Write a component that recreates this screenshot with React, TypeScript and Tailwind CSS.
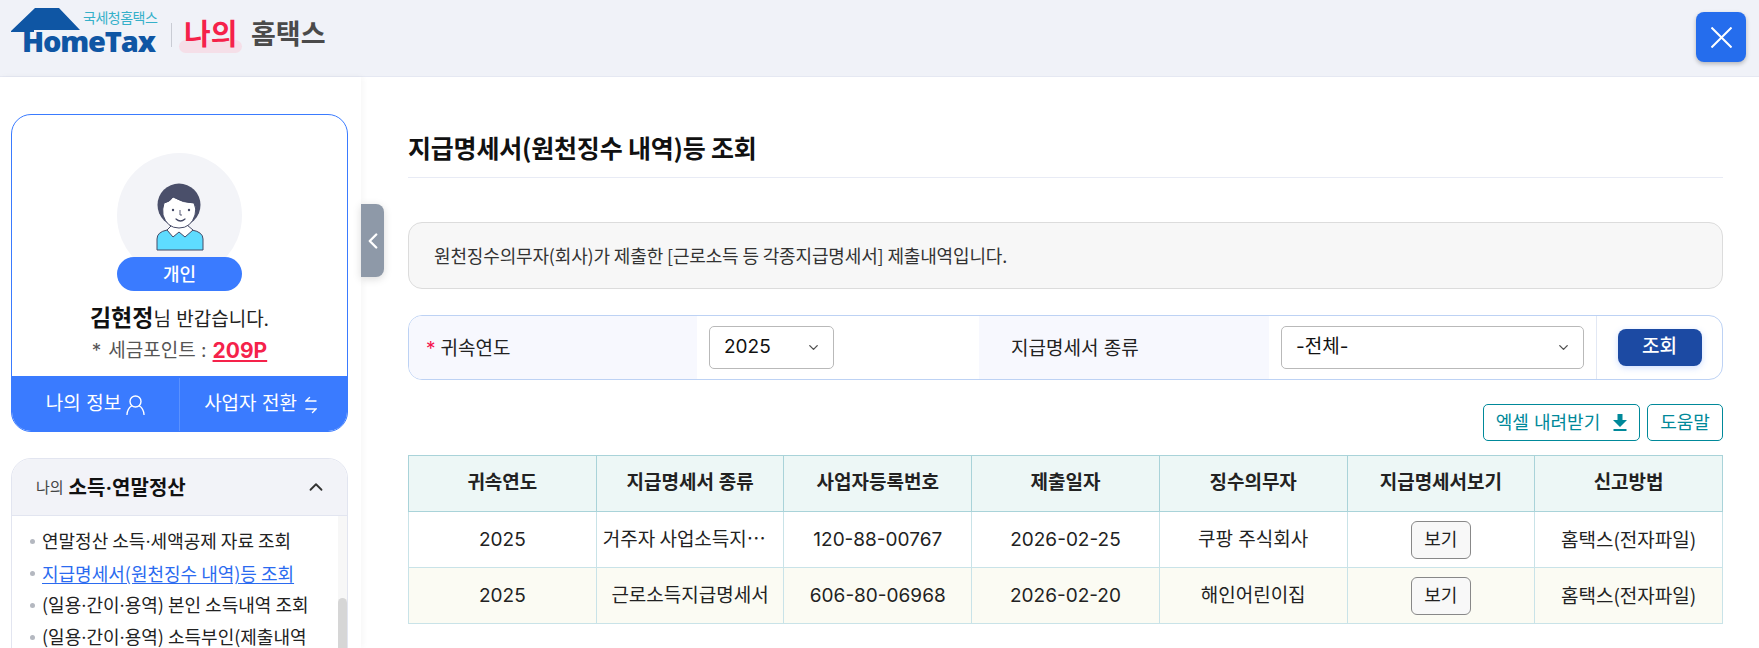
import React from "react";
import { ChevronDown, ChevronUp, ChevronLeft } from "lucide-react";

const rows = [
  { year: "2025", kind: "거주자 사업소득지급명세서", bizNo: "120-88-00767", date: "2026-02-25", payer: "쿠팡 주식회사", bg: "bg-white" },
  { year: "2025", kind: "근로소득지급명세서", bizNo: "606-80-06968", date: "2026-02-20", payer: "해인어린이집", bg: "bg-[#fbfbf3]" },
];

const headers = ["귀속연도", "지급명세서 종류", "사업자등록번호", "제출일자", "징수의무자", "지급명세서보기", "신고방법"];

const menu = [
  "연말정산 소득·세액공제 자료 조회",
  "지급명세서(원천징수 내역)등 조회",
  "(일용·간이·용역) 본인 소득내역 조회",
  "(일용·간이·용역) 소득부인(제출내역",
];

// the CJK font's middle dot is full width, the reference has a narrow one
function withDots(text: string) {
  return text.split("·").map((part, i) => (
    <React.Fragment key={i}>
      {i > 0 && <span className="font-['Inter',sans-serif]">·</span>}
      {part}
    </React.Fragment>
  ));
}

function Logo() {
  return (
    <div className="flex items-center h-[76px] pb-[6px]">
      <div className="relative w-[160px] h-[70px] self-start">
        <svg width="90" height="56" viewBox="0 0 90 56" className="absolute left-0 top-0">
          <path d="M11 31 L35 8 L59 8 L80 30 L34 30 L34 32 L27 32 L27 48 L25 48 L25 32 L11 32 Z" fill="#0f56a4" />
        </svg>
        <span className="absolute left-[83px] top-[8px] text-[14px] leading-5 whitespace-nowrap tracking-[-0.5px] text-[#35b0c9]">국세청홈택스</span>
        <span className="absolute left-[22px] top-[29px] text-[29px] leading-[24px] font-extrabold text-[#0f56a4] font-['Open_Sans',sans-serif] tracking-[-1.2px]">HomeTax</span>
      </div>
      <div className="w-px h-[24px] bg-[#c9ccd4] ml-[11px]" />
      <div className="relative ml-[7px] w-[63px] h-[40px]">
        <div className="absolute left-0 right-0 bottom-[2px] h-[13px] rounded-full bg-[#f5dfe8]" />
        <span className="absolute left-[5px] top-0 text-[29px] leading-[40px] font-bold text-[#f5224a]">나의</span>
      </div>
      <span className="ml-[9px] text-[27px] leading-9 font-bold text-[#4a4a4a]">홈택스</span>
    </div>
  );
}

function Avatar() {
  return (
    <svg width="125" height="125" viewBox="0 0 125 125" className="rounded-full bg-[#f3f4f8]">
      <path d="M40 97 V86 Q40 79 50 77 L62 73 L75 77 Q86 79 86 86 V97 Z" fill="#5edcff" stroke="#454a66" strokeWidth="1" />
      <path d="M50 77 L55 72 L70 72 L76 77 L68 84 L62 79 L56 84 Z" fill="#fff" stroke="#454a66" strokeWidth="1" />
      <circle cx="62" cy="52" r="21.5" fill="#4a4f6a" />
      <path d="M47 50 Q53 49 56 44 Q66 50 77 50 Q80 56 78 62 Q74 75 62 75 Q50 75 46 62 Q45 56 47 50 Z" fill="#fff" stroke="#454a66" strokeWidth="1" />
      <circle cx="56" cy="57" r="1.2" fill="#454a66" />
      <circle cx="72" cy="57" r="1.2" fill="#454a66" />
      <path d="M63 57 V62 H65" fill="none" stroke="#454a66" strokeWidth="0.9" />
      <path d="M59 66 Q63.5 70 68 66" fill="none" stroke="#454a66" strokeWidth="1.2" strokeLinecap="round" />
    </svg>
  );
}

function ProfileCard() {
  return (
    <div className="w-[337px] h-[318px] border border-[#3a7bff] rounded-[20px] overflow-hidden flex flex-col items-center bg-white">
      <div className="mt-[38px]">
        <Avatar />
      </div>
      <div className="relative -mt-[21px] w-[125px] h-[34px] rounded-full bg-[#3a7bff] text-white text-[18px] font-medium flex items-center justify-center">개인</div>
      <p className="mt-[9px] text-[#222] text-[19px] leading-[36px]">
        <b className="text-[23px] font-bold text-[#111]">김현정</b>님 반갑습니다.
      </p>
      <p className="-mt-[1px] text-[19px] leading-[28px] text-[#555] flex items-center">
        <span className="mr-[7px]">*</span>세금포인트 :
        <span className="ml-[6px] text-[21px] font-bold text-[#f5224a] underline underline-offset-2">209P</span>
      </p>
      <div className="mt-auto w-full h-[55px] pt-[2px] bg-[#3a7bff] flex text-white text-[19px]">
        <div className="w-[168px] flex items-center justify-center gap-[5px] border-r border-[#5a91ff]">
          나의 정보
          <svg width="19" height="20" viewBox="0 0 19 20" fill="none" stroke="#fff" strokeWidth="1.4">
            <circle cx="9.5" cy="6.5" r="5.5" />
            <path d="M1 19.5 Q1.5 13.5 5.5 11 M18 19.5 Q17.5 13.5 13.5 11" strokeLinecap="round" />
          </svg>
        </div>
        <div className="flex-1 flex items-center justify-center gap-[8px] pr-[6px]">
          사업자 전환
          <svg width="12" height="18" viewBox="0 0 12 18" fill="none" stroke="#fff" strokeWidth="1.4" strokeLinecap="round">
            <path d="M11 5 H1 L4.5 1.5" />
            <path d="M1 13 H11 L7.5 16.5" />
          </svg>
        </div>
      </div>
    </div>
  );
}

function SideMenu() {
  return (
    <div className="mt-[26px] w-[337px] border border-[#e2e5f0] rounded-t-[20px] overflow-hidden bg-white font-['Noto_Sans_CJK_KR',sans-serif]">
      <div className="h-[57px] bg-[#f2f3f8] border-b border-[#e2e5f0] flex items-center pl-[24px] pr-[20px]">
        <span className="text-[15px] text-[#444]">나의</span>
        <span className="ml-[5px] text-[20px] font-bold text-[#111]">{withDots("소득·연말정산")}</span>
        <ChevronUp className="ml-auto w-[22px] h-[22px] text-[#333]" strokeWidth={2} />
      </div>
      <div className="flex h-[140px]">
        <ul className="flex-1 pt-[9px] pl-[18px] text-[18px] leading-[32px] text-[#222] whitespace-nowrap overflow-hidden">
          {menu.map((item, i) => (
            <li key={item} className="h-[32px] flex items-center gap-[7px]">
              <span className="w-[5px] h-[5px] rounded-full bg-[#b4b8c0]" />
              <span className={i === 1 ? "text-[#2b6bf0] underline underline-offset-2" : ""}>{withDots(item)}</span>
            </li>
          ))}
        </ul>
        <div className="w-[9px] bg-[#f7f7f7]">
          <div className="mt-[82px] h-[60px] bg-[#d6d6d6] rounded-t-full" />
        </div>
      </div>
    </div>
  );
}

function SelectBox({ value, className }: { value: string; className: string }) {
  return (
    <div className={`h-[43px] border border-[#b9b9b9] rounded-[5px] bg-white flex items-center justify-between pl-[14px] pr-[12px] text-[19px] text-[#111] ${className}`}>
      {value}
      <ChevronDown className="w-[15px] h-[15px] text-[#555]" strokeWidth={2.2} />
    </div>
  );
}

function SearchForm() {
  return (
    <div className="mt-[26px] h-[65px] border border-[#bdd2f4] rounded-[14px] overflow-hidden flex items-stretch text-[19px] text-[#222]">
      <div className="w-[288px] bg-[#f7f8fe] flex items-center pl-[17px] pt-[3px]">
        <span className="text-[#f5124f] mr-[5px]">*</span>귀속연도
      </div>
      <div className="w-[282px] flex items-center pl-[12px]">
        <SelectBox value="2025" className="w-[125px]" />
      </div>
      <div className="w-[290px] bg-[#f7f8fe] flex items-center pl-[32px] pt-[3px]">지급명세서 종류</div>
      <div className="flex-1 flex items-center pl-[12px] pr-[12px]">
        <SelectBox value="-전체-" className="w-full" />
      </div>
      <div className="w-[126px] border-l border-[#e2e8f4] flex items-center justify-center">
        <button className="w-[84px] h-[37px] rounded-[8px] bg-[#1c4aa3] text-white text-[19px] font-medium shadow-[0_2px_6px_rgba(58,123,255,0.25)]">조회</button>
      </div>
    </div>
  );
}

function Toolbar() {
  return (
    <div className="mt-[24px] flex justify-end gap-[7px] text-[18px] text-[#00899a]">
      <button className="w-[157px] h-[37px] border border-[#00899a] rounded-[5px] flex items-center justify-center gap-[13px]">
        엑셀 내려받기
        <svg width="14" height="17" viewBox="0 0 14 17" fill="#00899a">
          <path d="M4.5 0 H9.5 V6 H14 L7 13 L0 6 H4.5 Z" />
          <rect x="0.5" y="15" width="13" height="2" />
        </svg>
      </button>
      <button className="w-[76px] h-[37px] border border-[#00899a] rounded-[5px]">도움말</button>
    </div>
  );
}

function ResultTable() {
  return (
    <table className="mt-[14px] w-full table-fixed border-collapse border border-[#a9d3d9] text-[19px] text-[#222] text-center">
      <thead>
        <tr className="h-[56px] bg-[#edf7f6]">
          {headers.map((h) => (
            <th key={h} className="border border-[#a9d3d9] font-semibold">{h}</th>
          ))}
        </tr>
      </thead>
      <tbody>
        {rows.map((r) => (
          <tr key={r.bizNo} className={`h-[56px] ${r.bg}`}>
            <td className="border border-[#c9e3e8] pt-[1px]">{r.year}</td>
            <td className="border border-[#c9e3e8] px-[6px] pb-[2px] truncate font-['Noto_Sans_CJK_KR',sans-serif]">{r.kind}</td>
            <td className="border border-[#c9e3e8] pt-[1px]">{r.bizNo}</td>
            <td className="border border-[#c9e3e8] pt-[1px]">{r.date}</td>
            <td className="border border-[#c9e3e8] pt-[1px]">{r.payer}</td>
            <td className="border border-[#c9e3e8]">
              <button className="w-[60px] h-[38px] bg-[#f8f8f8] border border-[#888] rounded-[6px] text-[18px] align-middle">보기</button>
            </td>
            <td className="border border-[#c9e3e8] pb-[1px] font-['Noto_Sans_CJK_KR',sans-serif]">홈택스(전자파일)</td>
          </tr>
        ))}
      </tbody>
    </table>
  );
}

export default function App() {
  return (
    <div className="w-[1759px] h-[648px] overflow-hidden bg-white font-['Inter','Noto_Sans_CJK_KR',sans-serif]">
      <header className="h-[77px] bg-[#f0f2f8] border-b border-[#e5e8f2] flex items-center justify-between pl-0 pr-[13px]">
        <Logo />
        <button className="w-[50px] h-[50px] -mt-[2px] rounded-[8px] bg-[#256ded] flex items-center justify-center shadow-[0_2px_4px_rgba(0,0,0,0.25)]">
          <svg width="21" height="21" viewBox="0 0 21 21" stroke="#fff" strokeWidth="2">
            <path d="M0.5 0.5 L20.5 20.5 M20.5 0.5 L0.5 20.5" />
          </svg>
        </button>
      </header>
      <div className="flex h-[571px]">
        <aside className="relative w-[361px] shrink-0 pt-[37px] pl-[11px] bg-white shadow-[2px_0_6px_rgba(0,0,0,0.04)]">
          <ProfileCard />
          <SideMenu />
          <button className="absolute left-[361px] top-[127px] w-[23px] h-[73px] bg-[#8e99a8] rounded-r-[8px] flex items-center justify-center shadow-[0_2px_8px_rgba(0,0,0,0.15)]">
            <ChevronLeft className="w-[26px] h-[26px] shrink-0 text-white" strokeWidth={2.2} />
          </button>
        </aside>
        <main className="flex-1 pl-[47px] pr-[36px] pt-[55px]">
          <h1 className="h-[46px] border-b border-[#e8ebf5] text-[25px] leading-[30px] tracking-[-0.2px] font-bold text-[#111] font-['Noto_Sans_CJK_KR',sans-serif]">지급명세서(원천징수 내역)등 조회</h1>
          <div className="mt-[44px] h-[67px] bg-[#f7f7f7] border border-[#dcdcdc] rounded-[14px] flex items-center pl-[25px] pb-[1px] text-[18px] tracking-[-0.15px] text-[#333] font-['Noto_Sans_CJK_KR',sans-serif]">
            원천징수의무자(회사)가 제출한 [근로소득 등 각종지급명세서] 제출내역입니다.
          </div>
          <SearchForm />
          <Toolbar />
          <ResultTable />
        </main>
      </div>
    </div>
  );
}
